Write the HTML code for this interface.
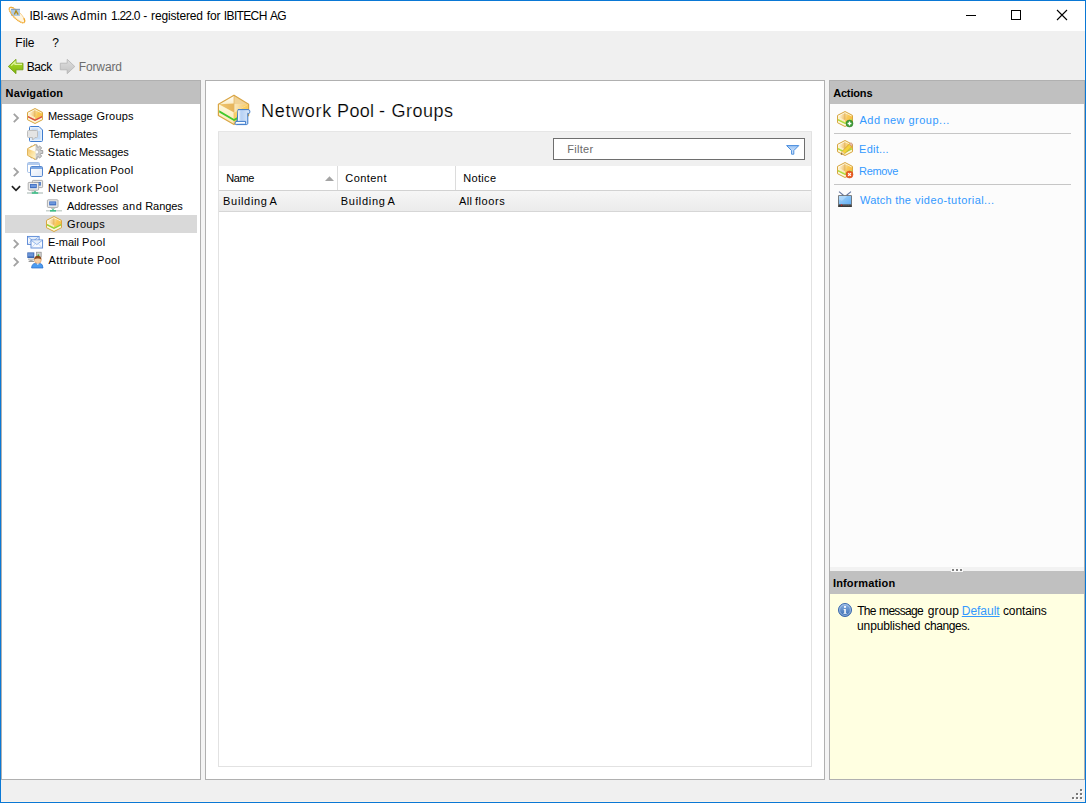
<!DOCTYPE html>
<html><head><meta charset="utf-8"><title>IBI-aws Admin</title>
<style>
*{box-sizing:border-box;margin:0;padding:0}
html,body{width:1086px;height:803px;overflow:hidden;background:#f0f0f0}
body{font-family:"Liberation Sans",sans-serif;font-size:12px;color:#000;position:relative}
.abs{position:absolute}
.t{position:absolute;white-space:nowrap}
.b{position:absolute}
svg{display:block;overflow:visible}
</style></head><body>

<svg width="0" height="0" style="position:absolute">
<defs>
 <linearGradient id="gBoxL" x1="0" y1="0.2" x2="1" y2="0.5"><stop offset="0" stop-color="#fffef8"/><stop offset=".5" stop-color="#f9e2ae"/><stop offset="1" stop-color="#edbe6e"/></linearGradient>
 <linearGradient id="gBoxR" x1="0" y1="0" x2="1" y2="0.6"><stop offset="0" stop-color="#fbe6b0"/><stop offset=".5" stop-color="#f8c858"/><stop offset="1" stop-color="#f7c044"/></linearGradient>
 <linearGradient id="gBoxF" x1="0" y1="0" x2="0" y2="1"><stop offset="0" stop-color="#fef7de"/><stop offset="1" stop-color="#fbeab4"/></linearGradient>
 <linearGradient id="gBoxFR" x1="0" y1="0" x2="1" y2="1"><stop offset="0" stop-color="#fbd978"/><stop offset="1" stop-color="#f5c04a"/></linearGradient>
 <linearGradient id="gGreen" x1="0" y1="0" x2="0" y2="1"><stop offset="0" stop-color="#b4e030"/><stop offset="1" stop-color="#7cb40c"/></linearGradient>
 <linearGradient id="gGray" x1="0" y1="0" x2="0" y2="1"><stop offset="0" stop-color="#dedede"/><stop offset="1" stop-color="#c2c2c2"/></linearGradient>
 <linearGradient id="gDoc" x1="0" y1="0" x2="1" y2="0"><stop offset="0" stop-color="#eaf2fc"/><stop offset=".45" stop-color="#b8d2f4"/><stop offset="1" stop-color="#dce9fa"/></linearGradient>
 <linearGradient id="gScr" x1="0" y1="0" x2="1" y2="1"><stop offset="0" stop-color="#a6d4fb"/><stop offset="1" stop-color="#62aef2"/></linearGradient>
 <linearGradient id="gInfo" x1="0" y1="0" x2="0" y2="1"><stop offset="0" stop-color="#8db4e2"/><stop offset="1" stop-color="#3568b0"/></linearGradient>
 <linearGradient id="gWin" x1="0" y1="0" x2="1" y2="1"><stop offset="0" stop-color="#ffffff"/><stop offset="1" stop-color="#dfe8f6"/></linearGradient>
 <linearGradient id="gFun" x1="0" y1="0" x2="0" y2="1"><stop offset="0" stop-color="#9cc4f4"/><stop offset="1" stop-color="#e4f0fc"/></linearGradient>
 <linearGradient id="gB32a" x1="0" y1="0" x2="0" y2="1"><stop offset="0" stop-color="#ffffff"/><stop offset="1" stop-color="#fbecc4"/></linearGradient>
 <linearGradient id="gB32b" x1="0" y1="0" x2="1" y2="0"><stop offset="0" stop-color="#fbeac0"/><stop offset="1" stop-color="#f6c45a"/></linearGradient>
 <linearGradient id="gB32c" x1="0" y1="0" x2="1" y2="0"><stop offset="0" stop-color="#f0c670"/><stop offset="1" stop-color="#e6b45a"/></linearGradient>
 <linearGradient id="gStat" x1="0" y1="0" x2="1" y2="1"><stop offset="0" stop-color="#f4c468"/><stop offset=".5" stop-color="#fbe2a0"/><stop offset="1" stop-color="#fef4d0"/></linearGradient>
</defs></svg>

<div class="b" style="left:0px;top:0px;width:1086px;height:803px;background:#f0f0f0;border:1px solid #0a78d5"></div>
<div class="b" style="left:1px;top:1px;width:1084px;height:30px;background:#fff;"></div>
<div class="b" style="left:201px;top:80px;width:4px;height:700px;background:#f4f4f4;"></div>
<div class="b" style="left:825px;top:80px;width:4px;height:700px;background:#f4f4f4;"></div>
<div class="b" style="left:1px;top:801px;width:1084px;height:1px;background:#faf3ea;"></div>
<div class="b" style="left:1px;top:80px;width:200px;height:700px;background:#fff;border:1px solid #b0b0b0"></div>
<div class="b" style="left:2px;top:81px;width:198px;height:23px;background:#c0c0c0;"></div>
<div class="b" style="left:5px;top:215px;width:192px;height:18px;background:#d9d9d9;"></div>
<div class="b" style="left:205px;top:80px;width:620px;height:700px;background:#fff;border:1px solid #b0b0b0"></div>
<div class="b" style="left:218px;top:131px;width:594px;height:636px;background:#fff;border:1px solid #e2e2e2"></div>
<div class="b" style="left:219px;top:131px;width:592px;height:35px;background:#f0f0f0;"></div>
<div class="b" style="left:218px;top:131px;width:594px;height:1px;background:#e6e6e6;"></div>
<div class="b" style="left:219px;top:190px;width:592px;height:1px;background:#d2d2d2;"></div>
<div class="b" style="left:219px;top:191px;width:592px;height:20px;background:linear-gradient(#f6f6f6,#ebebeb);"></div>
<div class="b" style="left:219px;top:211px;width:592px;height:1px;background:#d6d6d6;"></div>
<div class="b" style="left:337px;top:166px;width:1px;height:24px;background:#dcdcdc;"></div>
<div class="b" style="left:455px;top:166px;width:1px;height:24px;background:#dcdcdc;"></div>
<div class="b" style="left:553px;top:138px;width:252px;height:22px;background:#fff;border:1px solid #6e6e6e"></div>
<div class="b" style="left:829px;top:80px;width:256px;height:700px;background:#fcfcfc;border:1px solid #b0b0b0"></div>
<div class="b" style="left:830px;top:81px;width:254px;height:23px;background:#c0c0c0;"></div>
<div class="b" style="left:830px;top:567px;width:254px;height:4px;background:#f2f2f2;"></div>
<div class="b" style="left:830px;top:571px;width:254px;height:23px;background:#c0c0c0;"></div>
<div class="b" style="left:830px;top:594px;width:254px;height:185px;background:#ffffe1;"></div>
<div class="b" style="left:834px;top:133px;width:237px;height:1px;background:#c6c6c6;"></div>
<div class="b" style="left:834px;top:184px;width:237px;height:1px;background:#c6c6c6;"></div>
<div class="b" style="left:951px;top:568px;width:4px;height:4px;background:#fafafa;"></div>
<div class="b" style="left:952px;top:569px;width:2px;height:2px;background:#828282;"></div>
<div class="b" style="left:955px;top:568px;width:4px;height:4px;background:#fafafa;"></div>
<div class="b" style="left:956px;top:569px;width:2px;height:2px;background:#828282;"></div>
<div class="b" style="left:959px;top:568px;width:4px;height:4px;background:#fafafa;"></div>
<div class="b" style="left:960px;top:569px;width:2px;height:2px;background:#828282;"></div>
<svg class="abs" style="left:325px;top:176px" width="9" height="5" viewBox="0 0 9 5"><path d="M0 5L4.5 .3L9 5Z" fill="#a4a4a4"/></svg>
<svg class="abs" style="left:950px;top:1px" width="135" height="30" viewBox="0 0 135 30"><path d="M16 14.5h10" stroke="#000" stroke-width="1" fill="none"/><rect x="61.5" y="9.5" width="9" height="9" stroke="#000" stroke-width="1" fill="none"/><path d="M107 9l10 10M117 9l-10 10" stroke="#000" stroke-width="1.1" fill="none"/></svg>
<svg class="abs" style="left:9px;top:7px" width="16" height="16" viewBox="0 0 16 16"><g transform="rotate(45 8 8)"><ellipse cx="8" cy="8" rx="10.4" ry="3.6" fill="#fff4dc" stroke="#f6c878" stroke-width=".9" opacity=".85"/></g><rect x="2" y="2" width="9" height="7" fill="#a9c6e6" opacity=".9"/><path d="M2 2.3h9" stroke="#6c88a8" stroke-width=".8"/><path d="M5.4 7.6L7 3.8L9.2 7.6" stroke="#b08a18" stroke-width="1.3" fill="none"/><g transform="rotate(45 8 8)"><path d="M-2.4 8A10.4 3.6 0 0 0 18.4 8" fill="none" stroke="#f0a830" stroke-width="1.3" stroke-dasharray="1.2 .5" opacity=".9"/><path d="M15 5.4A10.4 3.6 0 0 1 18.4 8" fill="none" stroke="#f0a830" stroke-width="1.2"/><path d="M-2.4 8A10.4 3.6 0 0 1 1 5.4" fill="none" stroke="#f0a830" stroke-width="1.2"/></g></svg>
<svg class="abs" style="left:8px;top:59px" width="16" height="16" viewBox="0 0 16 16"><path d="M.3 7.5L8 .3V4.2H15V10.8H8V14.7Z" fill="url(#gGreen)" stroke="#6e9c10" stroke-width=".8" stroke-linejoin="round"/><path d="M3.2 6.6L7 3V5.4H14" stroke="#e4f6a4" stroke-width="1.2" fill="none" opacity=".95"/></svg>
<svg class="abs" style="left:60px;top:59px" width="16" height="16" viewBox="0 0 16 16"><path d="M14.8 7.5L7.2 .3V4.2H.3V10.8H7.2V14.7Z" fill="url(#gGray)" stroke="#b4b4b4" stroke-width=".8" stroke-linejoin="round"/></svg>
<svg class="abs" style="left:12px;top:113px" width="8" height="10" viewBox="0 0 8 10"><path d="M1.8 .8L6 5L1.8 9.2" stroke="#a2a2a2" stroke-width="1.8" fill="none"/></svg>
<svg class="abs" style="left:12px;top:167px" width="8" height="10" viewBox="0 0 8 10"><path d="M1.8 .8L6 5L1.8 9.2" stroke="#a2a2a2" stroke-width="1.8" fill="none"/></svg>
<svg class="abs" style="left:12px;top:239px" width="8" height="10" viewBox="0 0 8 10"><path d="M1.8 .8L6 5L1.8 9.2" stroke="#a2a2a2" stroke-width="1.8" fill="none"/></svg>
<svg class="abs" style="left:12px;top:257px" width="8" height="10" viewBox="0 0 8 10"><path d="M1.8 .8L6 5L1.8 9.2" stroke="#a2a2a2" stroke-width="1.8" fill="none"/></svg>
<svg class="abs" style="left:11px;top:185px" width="10" height="8" viewBox="0 0 10 8"><path d="M.9 1.2L5 5.3L9.1 1.2" stroke="#222" stroke-width="1.7" fill="none"/></svg>
<svg class="abs" style="left:27px;top:108px" width="16" height="16" viewBox="0 0 16 16"><path d="M8 .5L15.5 4.4V11.7L8 15.5L.5 11.7V4.4Z" fill="#fef8d8"/><path d="M1 4.6L8 1V11.4L1 7.9Z" fill="url(#gBoxL)"/><path d="M15 4.6L8 1V11.4L15 7.9Z" fill="url(#gBoxR)"/><path d="M1 5.6L8 9.2V11.4L1 7.9Z" fill="#fdf3d2" opacity=".75"/><path d="M8 2.4V8.6" stroke="#dcae52" stroke-width=".7"/><path d="M1.3 4.9L8 1.5L14.7 4.9" fill="none" stroke="#fffdf0" stroke-width="1" opacity=".9"/><path d="M1 7.9L8 11.4L15 7.9V9.5L8 13L1 9.5Z" fill="#d64a36"/><path d="M1 7.9L8 11.4L15 7.9V8.5L8 12L1 8.5Z" fill="#e2574a"/><path d="M8 .5L15.5 4.4V11.7L8 15.5L.5 11.7V4.4Z" fill="none" stroke="#d8a640" stroke-width="1" stroke-linejoin="round"/></svg>
<svg class="abs" style="left:27px;top:126px" width="16" height="16" viewBox="0 0 16 16"><path d="M3.5 .5H12L15.5 4V14.5Q15.5 15.5 14.5 15.5H3.5Q2.5 15.5 2.5 14.5V1.5Q2.5 .5 3.5 .5Z" fill="#e3eefb" stroke="#3f7dd0" stroke-width="1"/><path d="M4.5 2.5H11V5H13.5V13.5H4.5Z" fill="#c4dbf6"/><path d="M1.5 4.5H9.5Q10.5 4.5 10.5 5.5V10.5Q10.5 11.5 9.5 11.5H8L5.6 14V11.5H1.5Q.5 11.5 .5 10.5V5.5Q.5 4.5 1.5 4.5Z" fill="#e4e4e4" stroke="#bdbdbd" stroke-width="1"/></svg>
<svg class="abs" style="left:27px;top:144px" width="16" height="16" viewBox="0 0 16 16"><path d="M13.66 6.43L15.75 6.55L15.75 9.45L13.66 9.57L13.29 10.47L14.68 12.03L12.63 14.08L11.07 12.69L10.17 13.06L10.05 15.15L7.15 15.15L7.03 13.06L6.13 12.69L4.57 14.08L2.52 12.03L3.91 10.47L3.54 9.57L1.45 9.45L1.45 6.55L3.54 6.43L3.91 5.53L2.52 3.97L4.57 1.92L6.13 3.31L7.03 2.94L7.15 0.85L10.05 0.85L10.17 2.94L11.07 3.31L12.63 1.92L14.68 3.97L13.29 5.53Z" fill="#cdcdcd" stroke="#868686" stroke-width=".7" stroke-linejoin="round"/><circle cx="9.8" cy="8" r="2" fill="#fcfcfc" stroke="#9a9a9a" stroke-width=".5"/><path d="M8.5 .6L.6 4.6V11.4L8.5 15.4Z" fill="#fef6d8"/><path d="M8.2 1.4L1.4 4.9L8.2 7.6Z" fill="#fffdf4"/><path d="M1.2 5L8.3 7.8V14.8L1.2 11.2Z" fill="url(#gStat)"/><path d="M8.5 .6L.6 4.6V11.4L8.5 15.4" fill="none" stroke="#dba63c" stroke-width=".9" stroke-linejoin="round"/></svg>
<svg class="abs" style="left:27px;top:162px" width="16" height="16" viewBox="0 0 16 16"><rect x=".5" y=".5" width="12" height="10" rx="1.2" fill="#fff" stroke="#a4c0e8"/><rect x="1" y="1" width="11" height="2" fill="#b4ccee"/><rect x="3.5" y="4.5" width="12" height="10" rx="1.2" fill="url(#gWin)" stroke="#5486cf"/><rect x="4" y="5" width="11" height="2" fill="#7ea8e2"/></svg>
<svg class="abs" style="left:27px;top:180px" width="16" height="16" viewBox="0 0 16 16"><rect x="5.4" y="0.4" width="10.2" height="7.2" rx=".8" fill="#ececec" stroke="#9c9c9c" stroke-width=".8"/><rect x="7.2" y="2.0" width="6.6" height="3.6" fill="#3f6fc2"/><rect x="8.0" y="2.8" width="4.999999999999999" height="1.6000000000000005" fill="#6f98dc"/><rect x="1.2" y="2.4" width="10.4" height="7.8" rx=".8" fill="#ececec" stroke="#9c9c9c" stroke-width=".8"/><rect x="3.0" y="4.0" width="6.800000000000001" height="4.199999999999999" fill="#3f6fc2"/><rect x="3.8" y="4.8" width="5.2" height="2.2" fill="#6f98dc"/><path d="M5 10.4H8.6L9.4 11.6H4.2Z" fill="#b8b8b8"/><path d="M0 13H16" stroke="#bcc8c4" stroke-width="1.4"/><path d="M4.8 13H11.2" stroke="#3fbf88" stroke-width="1.6"/><path d="M8 11V13" stroke="#3fbf88" stroke-width="1.4"/></svg>
<svg class="abs" style="left:46px;top:198px" width="16" height="16" viewBox="0 0 16 16"><rect x="1.4" y="1.8" width="10.6" height="7.6" rx=".8" fill="#ececec" stroke="#9c9c9c" stroke-width=".8"/><rect x="3.2" y="3.4000000000000004" width="7.0" height="3.9999999999999996" fill="#3f6fc2"/><rect x="4.0" y="4.2" width="5.3999999999999995" height="2.0" fill="#6f98dc"/><path d="M5.4 9.6H8.8L9.4 10.8H4.8Z" fill="#b8b8b8"/><path d="M0 12.8H16" stroke="#bcc8c4" stroke-width="1.2"/><path d="M4 12.8H10" stroke="#3fbf88" stroke-width="1.6"/><path d="M7 10.8V12.8" stroke="#3fbf88" stroke-width="1.4"/></svg>
<svg class="abs" style="left:46px;top:216px" width="16" height="16" viewBox="0 0 16 16"><path d="M8 .5L15.5 4.4V11.7L8 15.5L.5 11.7V4.4Z" fill="#fef8d8"/><path d="M1 4.6L8 1V11.4L1 7.9Z" fill="url(#gBoxL)"/><path d="M15 4.6L8 1V11.4L15 7.9Z" fill="url(#gBoxR)"/><path d="M1 5.6L8 9.2V11.4L1 7.9Z" fill="#fdf3d2" opacity=".75"/><path d="M8 2.4V8.6" stroke="#dcae52" stroke-width=".7"/><path d="M1.3 4.9L8 1.5L14.7 4.9" fill="none" stroke="#fffdf0" stroke-width="1" opacity=".9"/><path d="M1 7.9L8 11.4L15 7.9V9.5L8 13L1 9.5Z" fill="#8ccc28"/><path d="M1 7.9L8 11.4L15 7.9V8.5L8 12L1 8.5Z" fill="#a8dc3c"/><path d="M8 .5L15.5 4.4V11.7L8 15.5L.5 11.7V4.4Z" fill="none" stroke="#d8a640" stroke-width="1" stroke-linejoin="round"/></svg>
<svg class="abs" style="left:27px;top:234px" width="16" height="16" viewBox="0 0 16 16"><rect x="0.5" y="2.4" width="11.6" height="8" fill="#f6f9fe" stroke="#5484d4" stroke-width=".9"/><path d="M1.1 3.0L6.3 7.0L11.5 3.0" stroke="#7aa4e4" stroke-width=".8" fill="#e4eefb"/><path d="M1.3 9.8L4.7 6.199999999999999M11.3 9.8L7.9 6.199999999999999" stroke="#b0caf0" stroke-width=".7" fill="none"/><rect x="4" y="6" width="11.6" height="8" fill="#f6f9fe" stroke="#5484d4" stroke-width=".9"/><path d="M4.6 6.6L9.8 10.6L15 6.6" stroke="#7aa4e4" stroke-width=".8" fill="#e4eefb"/><path d="M4.8 13.4L8.2 9.8M14.8 13.4L11.4 9.8" stroke="#b0caf0" stroke-width=".7" fill="none"/></svg>
<svg class="abs" style="left:27px;top:252px" width="16" height="16" viewBox="0 0 16 16"><rect x=".3" y=".4" width="7" height="5.6" fill="#3c69b4"/><rect x="1" y="1.2" width="5.4" height="3.2" fill="#6a94d8"/><rect x="1" y="6.4" width="6" height="1.6" fill="#c8c8c8"/><path d="M1.6 9.4H7" stroke="#9a9a9a" stroke-width="1.2"/><rect x="2.6" y="8" width="3" height="1" fill="#aaa"/><rect x="9.6" y=".2" width="4.6" height="5" fill="#d0d0d0" stroke="#8c8c8c" stroke-width=".7"/><circle cx="11.4" cy="3.2" r=".9" fill="#3cb43c"/><path d="M4.6 16Q4.8 11.6 8.2 11.4H13.2Q15.8 11.8 16 16Z" fill="#4c9cf0" stroke="#2a6cc8" stroke-width=".7"/><circle cx="10.8" cy="8" r="3.5" fill="#f8cfa4" stroke="#c88850" stroke-width=".5"/><path d="M7.2 7.6Q7.2 3.8 10.8 3.8Q14.4 3.8 14.4 7.6Q12.6 6.2 10.8 6.4Q9 6.2 7.2 7.6Z" fill="#8a4a1c"/><path d="M9.6 11.4L10.8 13L12 11.4Z" fill="#fff"/></svg>
<svg class="abs" style="left:218px;top:94px" width="32" height="32" viewBox="0 0 32 32"><path d="M16 1.2L30.6 10.2V21.4L16 30.6L.4 21.4V10.2Z" fill="#fbe9b0"/><path d="M16 1.6L1.2 10.3L16 10.3Z" fill="url(#gB32a)"/><path d="M16 1.6L30 10.3L16 10.3Z" fill="#f1d294"/><path d="M16 10.3L30 10.3L16 18.6Z" fill="url(#gB32b)"/><path d="M1.2 10.3L16 9.6V18.6Z" fill="url(#gB32c)"/><path d="M.8 10.5L16 18.8V30.2L.8 21.2Z" fill="url(#gBoxF)"/><path d="M30.2 10.5L16 18.8V30.2L30.2 21.2Z" fill="url(#gBoxFR)"/><path d="M16 2V18.6" stroke="#e4b864" stroke-width=".8"/><path d="M16 19V30" stroke="#f0c468" stroke-width=".8"/><path d="M1.2 16.3L16 25L20 22.8V24.9L16 27.1L1.2 18.4Z" fill="#42c82c"/><path d="M16 1.2L30.6 10.2V21.4L16 30.6L.4 21.4V10.2Z" fill="none" stroke="#d9a545" stroke-width="1.2" stroke-linejoin="round"/><path d="M20 15.6H30C31.8 15.6 32.2 17.4 31.6 18.8C31.2 19.8 30.2 19.8 29.8 19.2V29C29.8 30.2 29.2 30.6 28.2 30.6H18.2C17.2 30.6 16.8 29.8 17.2 28.8L18 27.2H19.2Z" fill="url(#gDoc)" stroke="#3a78c8" stroke-width="1" stroke-linejoin="round"/><path d="M18 27.4H27.6V29.8" fill="none" stroke="#3a78c8" stroke-width="1"/><path d="M18.4 28.6H27" stroke="#fff" stroke-width="1.3"/><path d="M20.8 16.6V26.6" stroke="#fff" stroke-width="1.2" opacity=".9"/></svg>
<svg class="abs" style="left:786px;top:145px" width="14" height="10" viewBox="0 0 14 10"><path d="M.6 .6H12.8L7.8 5.6V9.2H5.6V5.6Z" fill="url(#gFun)" stroke="#4088dc" stroke-width=".95" stroke-linejoin="round"/></svg>
<svg class="abs" style="left:837px;top:111px" width="16" height="16" viewBox="0 0 16 16"><path d="M8 .5L15.5 4.4V11.7L8 15.5L.5 11.7V4.4Z" fill="#fef8d8"/><path d="M1 4.6L8 1V11.4L1 7.9Z" fill="url(#gBoxL)"/><path d="M15 4.6L8 1V11.4L15 7.9Z" fill="url(#gBoxR)"/><path d="M1 5.6L8 9.2V11.4L1 7.9Z" fill="#fdf3d2" opacity=".75"/><path d="M8 2.4V8.6" stroke="#dcae52" stroke-width=".7"/><path d="M1.3 4.9L8 1.5L14.7 4.9" fill="none" stroke="#fffdf0" stroke-width="1" opacity=".9"/><path d="M1 7.9L8 11.4L15 7.9V9.5L8 13L1 9.5Z" fill="#a4d832"/><path d="M1 7.9L8 11.4L15 7.9V8.5L8 12L1 8.5Z" fill="#c0e854"/><path d="M8 .5L15.5 4.4V11.7L8 15.5L.5 11.7V4.4Z" fill="none" stroke="#d8a640" stroke-width="1" stroke-linejoin="round"/><circle cx="12.5" cy="12.5" r="3.5" fill="#3c9c34" stroke="#2c7c28" stroke-width=".5"/><path d="M10.6 12.5H14.4M12.5 10.6V14.4" stroke="#fff" stroke-width="1.3"/></svg>
<svg class="abs" style="left:837px;top:140px" width="16" height="16" viewBox="0 0 16 16"><path d="M8 .5L15.5 4.4V11.7L8 15.5L.5 11.7V4.4Z" fill="#fef8d8"/><path d="M1 4.6L8 1V11.4L1 7.9Z" fill="url(#gBoxL)"/><path d="M15 4.6L8 1V11.4L15 7.9Z" fill="url(#gBoxR)"/><path d="M1 5.6L8 9.2V11.4L1 7.9Z" fill="#fdf3d2" opacity=".75"/><path d="M8 2.4V8.6" stroke="#dcae52" stroke-width=".7"/><path d="M1.3 4.9L8 1.5L14.7 4.9" fill="none" stroke="#fffdf0" stroke-width="1" opacity=".9"/><path d="M1 7.9L8 11.4L15 7.9V9.5L8 13L1 9.5Z" fill="#a4d832"/><path d="M1 7.9L8 11.4L15 7.9V8.5L8 12L1 8.5Z" fill="#c0e854"/><path d="M8 .5L15.5 4.4V11.7L8 15.5L.5 11.7V4.4Z" fill="none" stroke="#d8a640" stroke-width="1" stroke-linejoin="round"/><path d="M4 14.6L5.2 11.2L12.4 4L15 6.6L7.6 13.8Z" fill="#f4d23c" stroke="#c89a30" stroke-width=".7"/><path d="M12.4 4L13.4 3Q14.2 2.6 15 3.4Q15.8 4.4 15.2 5.2L15 6.6Z" fill="#f0c0b0" stroke="#c89070" stroke-width=".6"/><path d="M4 14.6L5.2 11.2L7.6 13.8Z" fill="#f4d8b0"/><path d="M4 14.6L4.6 13L5.6 14Z" fill="#3a2a1a"/></svg>
<svg class="abs" style="left:837px;top:162px" width="16" height="16" viewBox="0 0 16 16"><path d="M8 .5L15.5 4.4V11.7L8 15.5L.5 11.7V4.4Z" fill="#fef8d8"/><path d="M1 4.6L8 1V11.4L1 7.9Z" fill="url(#gBoxL)"/><path d="M15 4.6L8 1V11.4L15 7.9Z" fill="url(#gBoxR)"/><path d="M1 5.6L8 9.2V11.4L1 7.9Z" fill="#fdf3d2" opacity=".75"/><path d="M8 2.4V8.6" stroke="#dcae52" stroke-width=".7"/><path d="M1.3 4.9L8 1.5L14.7 4.9" fill="none" stroke="#fffdf0" stroke-width="1" opacity=".9"/><path d="M1 7.9L8 11.4L15 7.9V9.5L8 13L1 9.5Z" fill="#a4d832"/><path d="M1 7.9L8 11.4L15 7.9V8.5L8 12L1 8.5Z" fill="#c0e854"/><path d="M8 .5L15.5 4.4V11.7L8 15.5L.5 11.7V4.4Z" fill="none" stroke="#d8a640" stroke-width="1" stroke-linejoin="round"/><circle cx="12.5" cy="12.5" r="3.5" fill="#ec5c20" stroke="#c8441c" stroke-width=".5"/><path d="M11.1 11.1L13.9 13.9M13.9 11.1L11.1 13.9" stroke="#fff" stroke-width="1.2"/></svg>
<svg class="abs" style="left:837px;top:191px" width="16" height="16" viewBox="0 0 16 16"><path d="M2 .6L6.4 4.2M14 .6L9.6 4.2" stroke="#67789f" stroke-width="1.1"/><rect x="1.2" y="4.2" width="13.6" height="11.6" rx=".5" fill="#4c4c4c"/><rect x="1.9" y="4.9" width="12.2" height="8.4" fill="url(#gScr)"/><path d="M1.9 4.9H10.4L5 9.8L1.9 8.6Z" fill="#c0e2fd" opacity=".55"/><rect x="1.2" y="14.6" width="13.6" height="1.2" fill="#2c2c2c"/><rect x="3.9" y="13.5" width="1.3" height="1.1" fill="#ee2222"/><path d="M6.4 14.1H13.4" stroke="#8a8a8a" stroke-width=".8" stroke-dasharray="1.1 1"/></svg>
<svg class="abs" style="left:838px;top:603px" width="14" height="14" viewBox="0 0 14 14"><circle cx="7" cy="7" r="6.5" fill="url(#gInfo)" stroke="#3a68ac" stroke-width="1"/><circle cx="7" cy="7" r="5.4" fill="none" stroke="#b8d0f0" stroke-width=".8" opacity=".8"/><circle cx="7" cy="3.9" r="1.05" fill="#fff"/><path d="M5.6 5.9H7.8V10H8.6V10.8H5.5V10H6.3V6.7H5.6Z" fill="#fff"/></svg>
<div class="b" style="left:1081px;top:790px;width:2px;height:2px;background:#fff"></div><div class="b" style="left:1080px;top:789px;width:2px;height:2px;background:#7a7a7a"></div><div class="b" style="left:1077px;top:794px;width:2px;height:2px;background:#fff"></div><div class="b" style="left:1076px;top:793px;width:2px;height:2px;background:#7a7a7a"></div><div class="b" style="left:1081px;top:794px;width:2px;height:2px;background:#fff"></div><div class="b" style="left:1080px;top:793px;width:2px;height:2px;background:#7a7a7a"></div><div class="b" style="left:1073px;top:798px;width:2px;height:2px;background:#fff"></div><div class="b" style="left:1072px;top:797px;width:2px;height:2px;background:#7a7a7a"></div><div class="b" style="left:1077px;top:798px;width:2px;height:2px;background:#fff"></div><div class="b" style="left:1076px;top:797px;width:2px;height:2px;background:#7a7a7a"></div><div class="b" style="left:1081px;top:798px;width:2px;height:2px;background:#fff"></div><div class="b" style="left:1080px;top:797px;width:2px;height:2px;background:#7a7a7a"></div>
<div class="t" id="title_0" style="left:29.45px;top:8px;font-size:12px;line-height:16px;height:16px;letter-spacing:-0.219px;">IBI-aws</div>
<div class="t" id="title_1" style="left:71.08px;top:8px;font-size:12px;line-height:16px;height:16px;letter-spacing:0.454px;">Admin</div>
<div class="t" id="title_2" style="left:111.04px;top:8px;font-size:12px;line-height:16px;height:16px;letter-spacing:-0.800px;">1.22.0</div>
<div class="t" id="title_3" style="left:143.32px;top:8px;font-size:12px;line-height:16px;height:16px;letter-spacing:0.000px;">-</div>
<div class="t" id="title_4" style="left:151.06px;top:8px;font-size:12px;line-height:16px;height:16px;letter-spacing:-0.164px;">registered</div>
<div class="t" id="title_5" style="left:206.85px;top:8px;font-size:12px;line-height:16px;height:16px;letter-spacing:-0.163px;">for</div>
<div class="t" id="title_6" style="left:223.87px;top:8px;font-size:12px;line-height:16px;height:16px;letter-spacing:-0.651px;">IBITECH</div>
<div class="t" id="title_7" style="left:270.08px;top:8px;font-size:12px;line-height:16px;height:16px;letter-spacing:-0.800px;">AG</div>
<div class="t" id="mfile" style="left:15.36px;top:35px;font-size:12px;line-height:16px;height:16px;letter-spacing:-0.063px;">File</div>
<div class="t" id="mq" style="left:52.16px;top:35px;font-size:12px;line-height:16px;height:16px;letter-spacing:0.000px;">?</div>
<div class="t" id="back" style="left:26.66px;top:59px;font-size:12px;line-height:16px;height:16px;letter-spacing:-0.371px;">Back</div>
<div class="t" id="fwd" style="left:78.66px;top:59px;font-size:12px;line-height:16px;height:16px;letter-spacing:-0.106px;color:#6d6d6d;">Forward</div>
<div class="t" id="nav" style="left:5.60px;top:86px;font-size:11px;line-height:15px;height:15px;letter-spacing:0.125px;font-weight:bold;">Navigation</div>
<div class="t" id="act" style="left:833.13px;top:86px;font-size:11px;line-height:15px;height:15px;letter-spacing:-0.156px;font-weight:bold;">Actions</div>
<div class="t" id="inf" style="left:832.90px;top:576px;font-size:11px;line-height:15px;height:15px;letter-spacing:0.180px;font-weight:bold;">Information</div>
<div class="t" id="tr0_0" style="left:47.96px;top:109px;font-size:11px;line-height:15px;height:15px;letter-spacing:0.007px;">Message</div>
<div class="t" id="tr0_1" style="left:96.50px;top:109px;font-size:11px;line-height:15px;height:15px;letter-spacing:0.181px;">Groups</div>
<div class="t" id="tr1_0" style="left:48.46px;top:127px;font-size:11px;line-height:15px;height:15px;letter-spacing:-0.135px;">Templates</div>
<div class="t" id="tr2_0" style="left:47.78px;top:145px;font-size:11px;line-height:15px;height:15px;letter-spacing:0.313px;">Static</div>
<div class="t" id="tr2_1" style="left:78.96px;top:145px;font-size:11px;line-height:15px;height:15px;letter-spacing:-0.032px;">Messages</div>
<div class="t" id="tr3_0" style="left:48.31px;top:163px;font-size:11px;line-height:15px;height:15px;letter-spacing:0.491px;">Application</div>
<div class="t" id="tr3_1" style="left:110.26px;top:163px;font-size:11px;line-height:15px;height:15px;letter-spacing:0.286px;">Pool</div>
<div class="t" id="tr4_0" style="left:47.96px;top:181px;font-size:11px;line-height:15px;height:15px;letter-spacing:0.641px;">Network</div>
<div class="t" id="tr4_1" style="left:95.08px;top:181px;font-size:11px;line-height:15px;height:15px;letter-spacing:0.384px;">Pool</div>
<div class="t" id="tr5_0" style="left:67.08px;top:199px;font-size:11px;line-height:15px;height:15px;letter-spacing:-0.134px;">Addresses</div>
<div class="t" id="tr5_1" style="left:122.40px;top:199px;font-size:11px;line-height:15px;height:15px;letter-spacing:0.567px;">and</div>
<div class="t" id="tr5_2" style="left:145.30px;top:199px;font-size:11px;line-height:15px;height:15px;letter-spacing:-0.116px;">Ranges</div>
<div class="t" id="tr6_0" style="left:67.06px;top:217px;font-size:11px;line-height:15px;height:15px;letter-spacing:0.329px;">Groups</div>
<div class="t" id="tr7_0" style="left:47.96px;top:235px;font-size:11px;line-height:15px;height:15px;letter-spacing:-0.050px;">E-mail</div>
<div class="t" id="tr7_1" style="left:82.07px;top:235px;font-size:11px;line-height:15px;height:15px;letter-spacing:0.366px;">Pool</div>
<div class="t" id="tr8_0" style="left:48.41px;top:253px;font-size:11px;line-height:15px;height:15px;letter-spacing:0.522px;">Attribute</div>
<div class="t" id="tr8_1" style="left:96.96px;top:253px;font-size:11px;line-height:15px;height:15px;letter-spacing:0.335px;">Pool</div>
<div class="t" id="head_0" style="left:261.07px;top:100px;font-size:18px;line-height:22px;height:22px;letter-spacing:0.684px;-webkit-text-stroke:0.18px #fff">Network</div>
<div class="t" id="head_1" style="left:337.07px;top:100px;font-size:18px;line-height:22px;height:22px;letter-spacing:0.310px;-webkit-text-stroke:0.18px #fff">Pool</div>
<div class="t" id="head_2" style="left:379.05px;top:100px;font-size:18px;line-height:22px;height:22px;letter-spacing:0.000px;-webkit-text-stroke:0.18px #fff">-</div>
<div class="t" id="head_3" style="left:391.56px;top:100px;font-size:18px;line-height:22px;height:22px;letter-spacing:0.472px;-webkit-text-stroke:0.18px #fff">Groups</div>
<div class="t" id="filter" style="left:567.26px;top:142px;font-size:11px;line-height:15px;height:15px;letter-spacing:0.272px;color:#6a6a6a;">Filter</div>
<div class="t" id="cname" style="left:226.26px;top:171px;font-size:11px;line-height:15px;height:15px;letter-spacing:-0.415px;">Name</div>
<div class="t" id="ccont" style="left:345.29px;top:171px;font-size:11px;line-height:15px;height:15px;letter-spacing:0.439px;">Content</div>
<div class="t" id="cnot" style="left:463.26px;top:171px;font-size:11px;line-height:15px;height:15px;letter-spacing:0.327px;">Notice</div>
<div class="t" id="d1_0" style="left:223.07px;top:194px;font-size:11px;line-height:15px;height:15px;letter-spacing:0.680px;">Building</div>
<div class="t" id="d1_1" style="left:269.42px;top:194px;font-size:11px;line-height:15px;height:15px;letter-spacing:0.000px;">A</div>
<div class="t" id="d2_0" style="left:340.74px;top:194px;font-size:11px;line-height:15px;height:15px;letter-spacing:0.721px;">Building</div>
<div class="t" id="d2_1" style="left:387.58px;top:194px;font-size:11px;line-height:15px;height:15px;letter-spacing:0.000px;">A</div>
<div class="t" id="d3_0" style="left:458.98px;top:194px;font-size:11px;line-height:15px;height:15px;letter-spacing:0.331px;">All</div>
<div class="t" id="d3_1" style="left:474.95px;top:194px;font-size:11px;line-height:15px;height:15px;letter-spacing:0.589px;">floors</div>
<div class="t" id="a1_0" style="left:859.41px;top:113px;font-size:11px;line-height:15px;height:15px;letter-spacing:0.630px;color:#3399ff;">Add</div>
<div class="t" id="a1_1" style="left:883.39px;top:113px;font-size:11px;line-height:15px;height:15px;letter-spacing:0.431px;color:#3399ff;">new</div>
<div class="t" id="a1_2" style="left:908.40px;top:113px;font-size:11px;line-height:15px;height:15px;letter-spacing:0.509px;color:#3399ff;">group...</div>
<div class="t" id="a2" style="left:859.08px;top:142px;font-size:11px;line-height:15px;height:15px;letter-spacing:0.219px;color:#3399ff;">Edit...</div>
<div class="t" id="a3" style="left:859.08px;top:164px;font-size:11px;line-height:15px;height:15px;letter-spacing:-0.329px;color:#3399ff;">Remove</div>
<div class="t" id="a4_0" style="left:859.92px;top:193px;font-size:11px;line-height:15px;height:15px;letter-spacing:0.249px;color:#3399ff;">Watch</div>
<div class="t" id="a4_1" style="left:895.33px;top:193px;font-size:11px;line-height:15px;height:15px;letter-spacing:0.179px;color:#3399ff;">the</div>
<div class="t" id="a4_2" style="left:915.04px;top:193px;font-size:11px;line-height:15px;height:15px;letter-spacing:0.434px;color:#3399ff;">video-tutorial...</div>
<div class="t" id="i1_0" style="left:857.32px;top:603px;font-size:12px;line-height:16px;height:16px;letter-spacing:-0.800px;">The</div>
<div class="t" id="i1_1" style="left:879.07px;top:603px;font-size:12px;line-height:16px;height:16px;letter-spacing:-0.680px;">message</div>
<div class="t" id="i1_2" style="left:927.77px;top:603px;font-size:12px;line-height:16px;height:16px;letter-spacing:0.105px;">group</div>
<div class="t" id="i2" style="left:961.80px;top:603px;font-size:12px;line-height:16px;height:16px;letter-spacing:-0.035px;color:#3399ff;text-decoration:underline;text-underline-offset:1px">Default</div>
<div class="t" id="i3" style="left:1002.99px;top:603px;font-size:12px;line-height:16px;height:16px;letter-spacing:-0.130px;">contains</div>
<div class="t" id="i4_0" style="left:857.06px;top:618px;font-size:12px;line-height:16px;height:16px;letter-spacing:-0.126px;">unpublished</div>
<div class="t" id="i4_1" style="left:924.33px;top:618px;font-size:12px;line-height:16px;height:16px;letter-spacing:-0.423px;">changes.</div>
</body></html>
